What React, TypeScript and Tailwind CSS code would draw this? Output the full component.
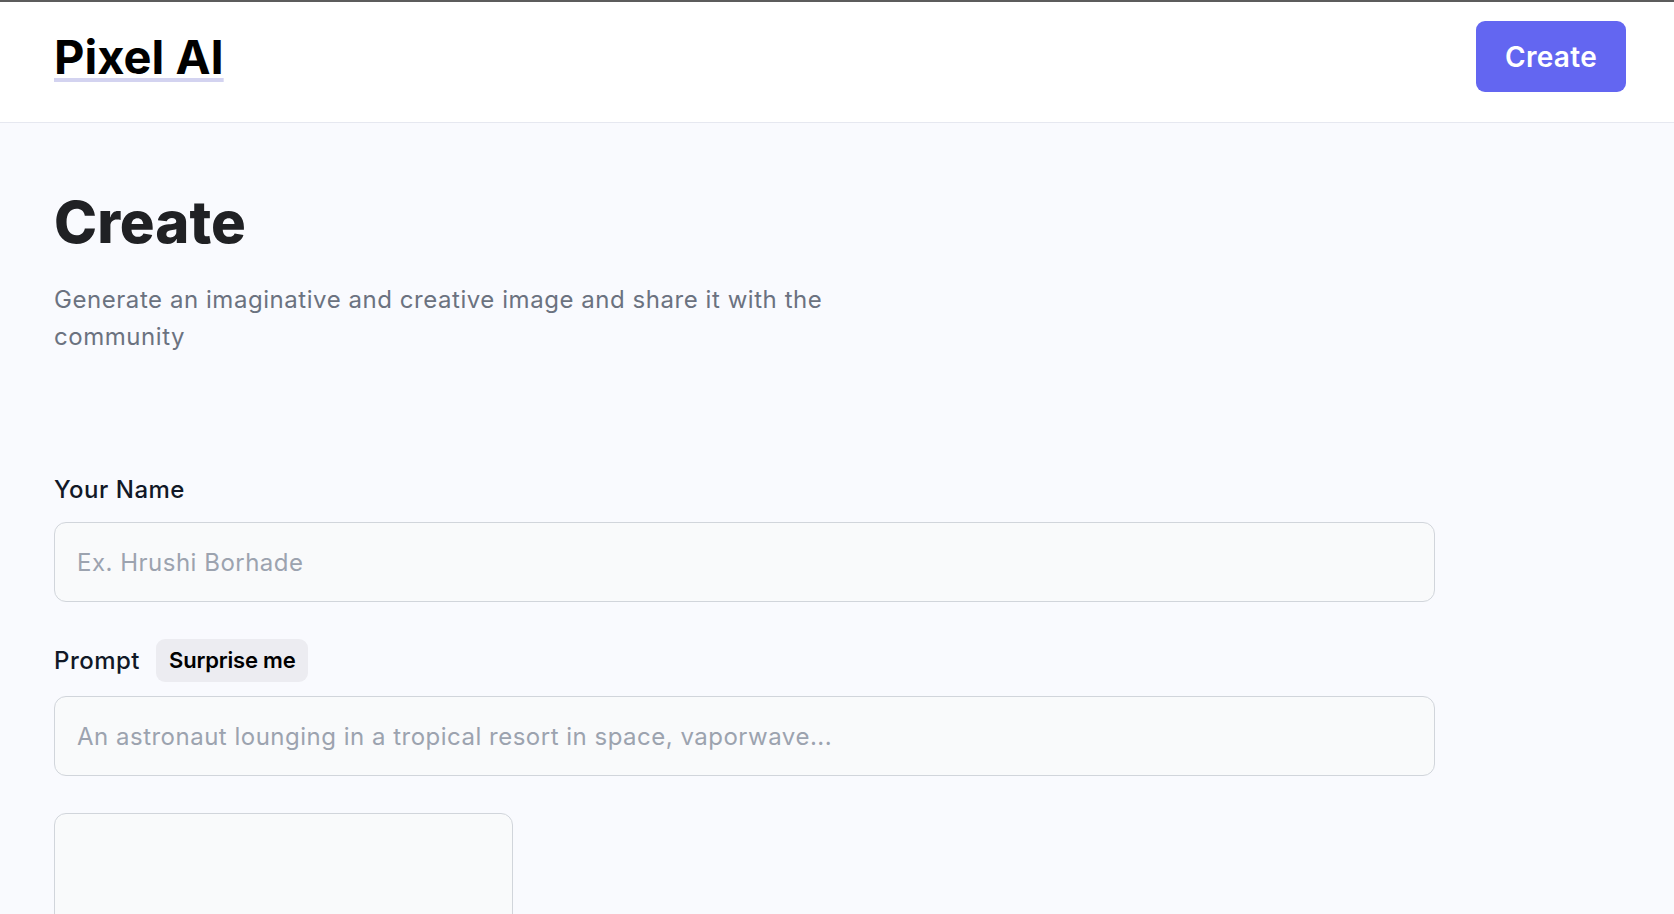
import React from 'react';

export default function App() {
  return (
    <div className="min-h-screen bg-[#f9fafe] font-['Inter',sans-serif] text-[#111827]">
      {/* Top strip */}
      <div className="h-[2px] bg-[#5c5c5c]" />

      {/* Header */}
      <header className="flex items-center justify-between bg-white pl-[54px] pr-[48px] pt-[19px] pb-[30px] border-b border-[#e6e8f0]">
        <a
          href="#"
          className="text-[47px] leading-[71px] font-bold text-black underline decoration-[#d3d3f0] decoration-[4px] underline-offset-[4px]"
        >
          Pixel AI
        </a>
        <button className="h-[71px] w-[150px] rounded-[9px] bg-[#6366f1] text-white text-[28px] font-semibold tracking-[0.3px]">
          Create
        </button>
      </header>

      {/* Main */}
      <main className="pl-[54px] pt-[70px]">
        <h1 className="text-[58px] leading-[58px] font-extrabold text-[#202124]">
          Create
        </h1>
        <p className="mt-[30px] max-w-[840px] text-[24px] leading-[37px] tracking-[0.55px] text-[#6b7280]">
          Generate an imaginative and creative image and share it with the community
        </p>

        <form className="mt-[119px] w-[1381px]">
          {/* Name */}
          <div>
            <label className="block text-[24px] leading-[32px] font-medium tracking-[0.5px] text-[#111827]">
              Your Name
            </label>
            <input
              type="text"
              placeholder="Ex. Hrushi Borhade"
              className="mt-[16px] block h-[80px] w-full rounded-[12px] border border-[#d1d5db] bg-[#f9fafb] px-[22px] text-[24px] tracking-[0.5px] text-[#111827] placeholder:text-[#9ca3af] outline-none"
            />
          </div>

          {/* Prompt */}
          <div className="mt-[37px]">
            <div className="flex items-center gap-[16px]">
              <label className="text-[24px] leading-[32px] font-medium tracking-[0.5px] text-[#111827]">Prompt</label>
              <button
                type="button"
                className="h-[43px] rounded-[9px] bg-[#ececf1] px-[13px] text-[22px] font-semibold tracking-[-0.2px] text-black"
              >
                Surprise me
              </button>
            </div>
            <input
              type="text"
              placeholder="An astronaut lounging in a tropical resort in space, vaporwave..."
              className="mt-[14px] block h-[80px] w-full rounded-[12px] border border-[#d1d5db] bg-[#f9fafb] px-[22px] text-[24px] tracking-[0.5px] text-[#111827] placeholder:text-[#9ca3af] outline-none"
            />
          </div>

          {/* Preview */}
          <div className="mt-[37px] h-[459px] w-[459px] rounded-[12px] border border-[#d1d5db] bg-[#f9fafb]" />
        </form>
      </main>
    </div>
  );
}
